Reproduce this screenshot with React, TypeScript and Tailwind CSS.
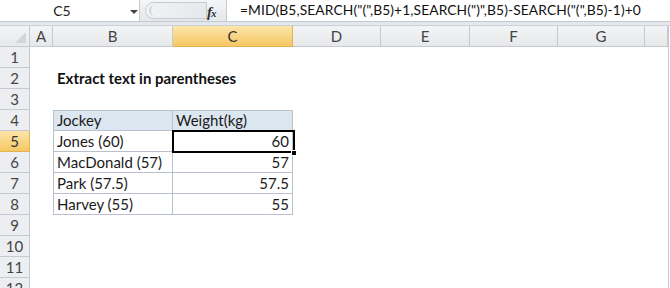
import React from 'react';

const cols = [
  { name: 'A', w: 'w-[23px]' },
  { name: 'B', w: 'w-[120px]' },
  { name: 'C', w: 'w-[120px]' },
  { name: 'D', w: 'w-[88px]' },
  { name: 'E', w: 'w-[89px]' },
  { name: 'F', w: 'w-[88px]' },
  { name: 'G', w: 'w-[87px]' },
  { name: '', w: 'w-[23px]' },
];

const table = [
  ['Jockey', 'Weight(kg)'],
  ['Jones (60)', '60'],
  ['MacDonald (57)', '57'],
  ['Park (57.5)', '57.5'],
  ['Harvey (55)', '55'],
];

const FORMULA = '=MID(B5,SEARCH("(",B5)+1,SEARCH(")",B5)-SEARCH("(",B5)-1)+0';

function FormulaBar() {
  return (
    <div className="flex h-[22px] bg-[#eef0f3] border-b border-[#c5cad1]">
      {/* name box */}
      <div className="relative flex w-[140px] items-center bg-white border-r border-[#c5cad1]">
        <span className="w-[124px] text-center text-[14px] text-[#222]">C5</span>
        <svg width="8" height="5" viewBox="0 0 8 5" className="absolute left-[130px] top-[10px]">
          <path d="M0 0 L8 0 L4 4 Z" fill="#444" />
        </svg>
      </div>
      {/* splitter grip + fx */}
      <div className="relative flex w-[86px] items-center bg-gradient-to-b from-[#f4f5f7] to-[#e4e7eb]">
        <div className="absolute left-[5px] top-[2px] h-[17px] w-[62px] rounded-l-full border border-[#c7ccd2] bg-gradient-to-r from-[#f0f2f4] to-[#e6e9ec]">
          <div className="absolute left-[3px] top-[2px] h-[11px] w-[9px] rounded-l-full border-l-2 border-[#d3d7dc]" />
        </div>
        <span className="absolute left-[67px] top-[1px] font-['Liberation_Serif',serif] italic text-[15px] font-bold text-[#333] tracking-[-1px]">
          f<span className="text-[11px]">x</span>
        </span>
      </div>
      <div className="flex flex-1 items-center bg-white border-l border-[#c5cad1] pl-[13px]">
        <span className="whitespace-nowrap text-[13.8px] text-[#111] tracking-[0.1px]">{FORMULA}</span>
      </div>
    </div>
  );
}

function ColumnHeaders() {
  return (
    <div className="flex h-[21px]">
      <div className="relative w-[30px] shrink-0 border-r border-b border-[#c6cad0] bg-gradient-to-b from-[#f3f4f5] to-[#e7e9eb]">
        <svg width="11" height="11" viewBox="0 0 11 11" className="absolute right-[3px] bottom-[3px]">
          <path d="M11 0 L11 11 L0 11 Z" fill="#d2d5d9" />
        </svg>
      </div>
      {cols.map((c) => (
        <div
          key={c.name + c.w}
          className={`${c.w} shrink-0 flex items-center justify-center border-r border-b text-[15px] ${
            c.name === 'C'
              ? 'bg-gradient-to-b from-[#fbe5a9] to-[#f6c863] border-[#e2b34e] text-[#333]'
              : 'bg-gradient-to-b from-[#f3f4f5] to-[#e6e8ea] border-[#c6cad0] text-[#444]'
          }`}
        >
          {c.name}
        </div>
      ))}
      <div className="w-[2px] shrink-0 bg-white border-l border-[#c6cad0]" />
    </div>
  );
}

function SheetRow({ n }: { n: number }) {
  const t = n >= 4 && n <= 8 ? table[n - 4] : null;
  const isHead = n === 4;
  const cellBase = 'h-full shrink-0 border-r border-b border-[#b9c2cc] flex items-center px-[3px] text-[15px] text-[#1a1a1a]';
  return (
    <div className="flex h-[21px]">
      <div
        className={`w-[30px] shrink-0 flex items-center justify-center border-r border-b text-[15px] ${
          n === 5
            ? 'bg-gradient-to-b from-[#fbe5a9] to-[#f6c863] border-[#e2b34e] text-[#333]'
            : 'bg-[#eceef1] border-[#c6cad0] text-[#444]'
        }`}
      >
        {n}
      </div>
      <div className="w-[23px] shrink-0" />
      {t ? (
        <>
          <div className={`${cellBase} w-[120px] border-l ${isHead ? 'border-t bg-[#dce6f1]' : 'bg-white'}`}>
            {t[0]}
          </div>
          <div
            className={`${cellBase} w-[120px] ${isHead ? 'border-t bg-[#dce6f1]' : 'bg-white justify-end'}`}
          >
            {t[1]}
          </div>
        </>
      ) : n === 2 ? (
        <div className="flex items-center pl-[4px] text-[15px] font-bold text-[#111] whitespace-nowrap">
          Extract text in parentheses
        </div>
      ) : null}
    </div>
  );
}

export default function App() {
  return (
    <div className="relative w-[670px] h-[288px] overflow-hidden bg-white font-['Lato','Open_Sans',sans-serif]">
      <FormulaBar />
      <div className="h-[4px] bg-[#e4e7eb] border-b border-[#cdd1d6]" />
      <ColumnHeaders />
      {Array.from({ length: 12 }, (_, i) => (
        <SheetRow key={i} n={i + 1} />
      ))}
      {/* right edge line */}
      <div className="absolute left-[668px] top-[26px] h-[262px] w-[1px] bg-[#c6cad0]" />
      {/* active cell C5 */}
      <div className="absolute left-[172px] top-[130px] h-[23px] w-[123px] border-2 border-black" />
      <div className="absolute left-[291px] top-[150px] h-[6px] w-[6px] bg-black border border-white" />
    </div>
  );
}
